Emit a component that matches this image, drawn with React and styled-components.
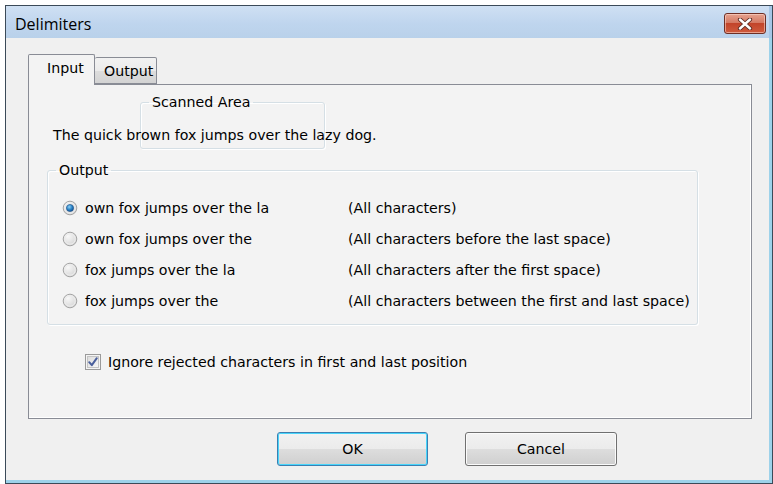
import React from 'react';
import styled, { createGlobalStyle } from 'styled-components';

const GlobalStyle = createGlobalStyle`
  html, body { margin: 0; padding: 0; background: #ffffff; }
  body { font-family: "DejaVu Sans", "Liberation Sans", sans-serif; }
`;

const ui = {
  font: '"DejaVu Sans", "Liberation Sans", sans-serif',
  size: '14.2px',
  face: '#f0f0f0',
  panel: '#f3f3f3',
  edge: '#898c95',
  group: '#d5dfe5',
  glow: '#9dd2ea',
};

/* ---------- window frame ---------- */
const Window = styled.div`
  margin: 5px 0 0 5px;
  width: 768px;
  height: 479px;
  box-sizing: border-box;
  border: 1px solid #3b4a58;
  display: flex;
  flex-direction: column;
  background: ${ui.face};
`;

const TitleBar = styled.div`
  height: 32px;
  flex: none;
  box-sizing: border-box;
  display: flex;
  align-items: center;
  justify-content: space-between;
  padding: 3px 3px 0 9px;
  background: linear-gradient(#cfe0f3, #bfd5ee 55%, #b9d1ea);
  border-right: 3px solid #a6c6e6;
`;

const Title = styled.span`
  font-family: "Open Sans", "Liberation Sans", sans-serif;
  font-size: 16px;
  color: #000;
`;

const CloseButton = styled.div`
  width: 42px;
  height: 21px;
  box-sizing: border-box;
  border: 1px solid #6e2f25;
  border-radius: 3px;
  background: linear-gradient(#e6a28f, #d47a64 45%, #c2442a 50%, #cf5b3e);
  box-shadow: inset 0 0 0 1px rgba(255, 220, 210, 0.55);
  display: flex;
  align-items: center;
  justify-content: center;
`;

const Client = styled.div`
  flex: 1;
  display: flex;
  flex-direction: column;
  padding: 16px 17px 9px 22px;
  border-right: 3px solid ${ui.glow};
  border-bottom: 3px solid ${ui.glow};
`;

/* ---------- tabs ---------- */
const TabStrip = styled.div`
  display: flex;
  align-items: flex-end;
  height: 30px;
  position: relative;
  z-index: 1;
`;

const Tab = styled.div`
  box-sizing: border-box;
  width: ${p => p.$width}px;
  height: ${p => (p.$active ? '31px' : '27px')};
  margin-bottom: ${p => (p.$active ? '-1px' : '0')};
  padding: 0 0 ${p => (p.$active ? '4px' : '0')} ${p => p.$inset}px;
  border: 1px solid ${ui.edge};
  border-bottom: ${p => (p.$active ? 'none' : `1px solid ${ui.edge}`)};
  border-left: ${p => (p.$active ? `1px solid ${ui.edge}` : 'none')};
  border-radius: 2px 2px 0 0;
  background: ${p => (p.$active ? ui.panel : 'linear-gradient(#f2f2f2, #ebebeb 50%, #dddddd 51%, #d3d3d3)')};
  font-size: ${ui.size};
  color: #000;
  display: flex;
  align-items: center;
  white-space: nowrap;
`;

const TabPanel = styled.div`
  height: 335px;
  box-sizing: border-box;
  border: 1px solid ${ui.edge};
  background: ${ui.panel};
  box-shadow: inset -1px -1px 0 #ffffff;
  display: flex;
  flex-direction: column;
  align-items: flex-start;
`;

/* ---------- group boxes ---------- */
const GroupBox = styled.fieldset`
  margin: ${p => p.$margin};
  width: ${p => p.$width}px;
  box-sizing: border-box;
  min-inline-size: 0;
  padding: 0 0 ${p => p.$bottom}px;
  border: 1px solid ${ui.group};
  border-radius: 3px;
  box-shadow: inset 1px 1px 0 #ffffff, 1px 1px 0 #ffffff;
`;

const Legend = styled.legend`
  margin-left: 8px;
  padding: 0 3px;
  font-size: ${ui.size};
  line-height: 16px;
  color: #000;
`;

const ScanRow = styled.div`
  position: relative;
  margin-top: 9px;
  padding-left: 111px;
`;

const SampleText = styled.div`
  position: absolute;
  left: 24px;
  top: 33px;
  font-size: ${ui.size};
  line-height: 17px;
  white-space: nowrap;
  color: #000;
`;

/* ---------- radios ---------- */
const RadioGrid = styled.div`
  display: grid;
  grid-template-columns: 286px auto;
  grid-auto-rows: 31px;
  align-items: center;
  padding: 14px 0 0 14px;
`;

const RadioLabel = styled.label`
  display: flex;
  align-items: center;
  gap: 7px;
  font-size: ${ui.size};
  color: #000;
  white-space: nowrap;
`;

const Hint = styled.span`
  font-size: ${ui.size};
  color: #000;
  white-space: nowrap;
`;

const Radio = ({ checked }) => (
  <svg width="16" height="16" viewBox="0 0 16 16">
    <defs>
      <radialGradient id="rOff" cx="0.35" cy="0.3" r="0.8">
        <stop offset="0" stopColor="#f8f8f8" />
        <stop offset="1" stopColor="#d2d2d2" />
      </radialGradient>
      <radialGradient id="rOn" cx="0.4" cy="0.35" r="0.7">
        <stop offset="0" stopColor="#8fd1f5" />
        <stop offset="0.55" stopColor="#2a83c6" />
        <stop offset="1" stopColor="#0f4c8f" />
      </radialGradient>
    </defs>
    <circle cx="8" cy="8" r="6.8" fill="url(#rOff)" stroke="#a3a3a3" strokeWidth="1" />
    <circle cx="8" cy="8" r="5.2" fill="none" stroke="#ececec" strokeWidth="1" />
    {checked && <circle cx="8" cy="8" r="3.6" fill="url(#rOn)" stroke="#1d4f84" strokeWidth="0.6" />}
  </svg>
);

/* ---------- checkbox ---------- */
const CheckRow = styled.label`
  display: flex;
  align-items: center;
  gap: 7px;
  margin: 29px 0 0 56px;
  font-size: ${ui.size};
  color: #000;
  white-space: nowrap;
`;

const CheckBox = () => (
  <svg width="16" height="16" viewBox="0 0 16 16">
    <defs>
      <linearGradient id="cbFill" x1="0" y1="0" x2="1" y2="1">
        <stop offset="0" stopColor="#dcdcdc" />
        <stop offset="1" stopColor="#f7f7f7" />
      </linearGradient>
    </defs>
    <rect x="0.5" y="0.5" width="15" height="15" fill="#f4f4f4" stroke="#9a9a9a" />
    <rect x="2.5" y="2.5" width="11" height="11" fill="url(#cbFill)" stroke="#c4c4c4" />
    <path d="M4.2 8.2 L6.8 11.2 L11.8 4.2" fill="none" stroke="#4a5f9c" strokeWidth="2" strokeLinecap="round" strokeLinejoin="round" />
  </svg>
);

/* ---------- buttons ---------- */
const ButtonRow = styled.div`
  display: flex;
  gap: 37px;
  margin-top: 13px;
  padding-left: 249px;
`;

const Button = styled.button`
  width: ${p => p.$width}px;
  height: 34px;
  box-sizing: border-box;
  border: 1px solid ${p => (p.$default ? '#3c7fb1' : '#707070')};
  border-radius: 3px;
  background: linear-gradient(#f2f2f2, #ebebeb 50%, #dddddd 51%, #cfcfcf);
  box-shadow: inset 0 0 0 1px ${p => (p.$default ? '#48d5fb' : '#fbfbfb')};
  font-family: ${ui.font};
  font-size: ${ui.size};
  color: #000;
  padding: 0;
`;

const outputs = [
  ['own fox jumps over the la', '(All characters)'],
  ['own fox jumps over the', '(All characters before the last space)'],
  ['fox jumps over the la', '(All characters after the first space)'],
  ['fox jumps over the', '(All characters between the first and last space)'],
];

export default function App() {
  return (
    <>
      <GlobalStyle />
      <Window>
        <TitleBar>
          <Title>Delimiters</Title>
          <CloseButton>
            <svg width="16" height="12" viewBox="0 0 16 12">
              <path d="M3 1.5 L13 10.5 M13 1.5 L3 10.5" stroke="#5a2a22" strokeWidth="4.2" strokeLinecap="round" />
              <path d="M3 1.5 L13 10.5 M13 1.5 L3 10.5" stroke="#ffffff" strokeWidth="2.4" strokeLinecap="round" />
            </svg>
          </CloseButton>
        </TitleBar>
        <Client>
          <TabStrip>
            <Tab $active $width={67} $inset={18}>Input</Tab>
            <Tab $width={62} $inset={9}>Output</Tab>
          </TabStrip>
          <TabPanel>
            <ScanRow>
              <GroupBox $width={185} $margin="0" $bottom={38}>
                <Legend>Scanned Area</Legend>
              </GroupBox>
              <SampleText>The quick brown fox jumps over the lazy dog.</SampleText>
            </ScanRow>
            <GroupBox $width={651} $margin="13px 0 0 18px" $bottom={8}>
              <Legend>Output</Legend>
              <RadioGrid>
                {outputs.map(([text, hint], i) => (
                  <React.Fragment key={i}>
                    <RadioLabel>
                      <Radio checked={i === 0} />
                      {text}
                    </RadioLabel>
                    <Hint>{hint}</Hint>
                  </React.Fragment>
                ))}
              </RadioGrid>
            </GroupBox>
            <CheckRow>
              <CheckBox />
              Ignore rejected characters in first and last position
            </CheckRow>
          </TabPanel>
          <ButtonRow>
            <Button $default $width={151}>OK</Button>
            <Button $width={152}>Cancel</Button>
          </ButtonRow>
        </Client>
      </Window>
    </>
  );
}
